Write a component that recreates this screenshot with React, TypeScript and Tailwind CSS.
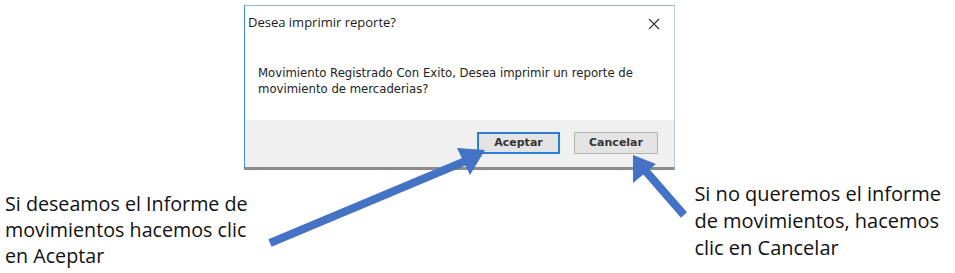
import React from "react";

export default function App() {
  return (
    <div className="relative w-[955px] h-[273px] bg-white overflow-hidden">
      <div className="flex flex-col">
        <div className="ml-[244px] mt-[5px] w-[431px] h-[165px] flex flex-col bg-white border border-[#9db4cf] border-l-[#3d8ee0] border-b-[3px] border-b-[#8c8c8c] border-r-[#b8c7d8]">
          <div className="h-[34px] flex items-center justify-between pl-[3px] pr-[14px]">
            <span className="text-[13px] text-[#1a1a1a]" style={{ fontFamily: '"Open Sans", "Noto Sans", sans-serif' }}>Desea imprimir reporte?</span>
            <svg width="12" height="12" viewBox="0 0 12 12" className="mt-[2px]">
              <path d="M1 1 L11 11 M11 1 L1 11" stroke="#333" strokeWidth="1.1" />
            </svg>
          </div>
          <div className="flex-1 pl-[13px] pt-[25px] text-[11.7px] leading-[16px] text-[#222]" style={{ fontFamily: '"DejaVu Sans", Verdana, sans-serif' }}>
            <p>Movimiento Registrado Con Exito, Desea imprimir un reporte de</p>
            <p>movimiento de mercaderias?</p>
          </div>
          <div className="h-[47px] bg-[#f0f0f0] flex items-start justify-end gap-[14px] pt-[12px] pr-[16px]" style={{ fontFamily: '"DejaVu Sans", Verdana, sans-serif' }}>
            <button className="w-[83px] h-[22px] border-2 border-[#2a7fd4] bg-[#e3e3e3] text-[11px] text-[#333] font-semibold">Aceptar</button>
            <button className="w-[84px] h-[22px] border border-[#b5b5b5] bg-[#e3e3e3] text-[11px] text-[#333] font-semibold">Cancelar</button>
          </div>
        </div>
        <div className="flex justify-between mt-[10px]">
          <div className="ml-[5px] mt-[11px] text-[19.7px] leading-[26px] text-[#111]" style={{ fontFamily: '"Open Sans", sans-serif' }}>
            <p>Si deseamos el Informe de</p>
            <p>movimientos hacemos clic</p>
            <p>en Aceptar</p>
          </div>
          <div className="mr-[14px] text-[20px] leading-[27px] text-[#111]" style={{ fontFamily: '"Open Sans", sans-serif' }}>
            <p>Si no queremos el informe</p>
            <p>de movimientos, hacemos</p>
            <p>clic en Cancelar</p>
          </div>
        </div>
      </div>
      <svg className="absolute left-0 top-0 pointer-events-none" width="955" height="273" viewBox="0 0 955 273">
        <line x1="270" y1="243" x2="468" y2="160" stroke="#4472c4" strokeWidth="8" />
        <polygon points="485,150 457,148 470,175" fill="#4472c4" />
        <line x1="684" y1="215" x2="643" y2="168" stroke="#4472c4" strokeWidth="8" />
        <polygon points="633,155 633,183 656,164" fill="#4472c4" />
      </svg>
    </div>
  );
}
